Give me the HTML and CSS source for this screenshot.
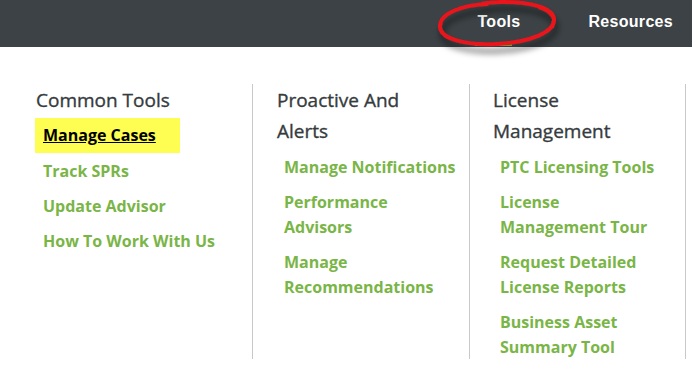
FILE: index.html
```html
<!DOCTYPE html>
<html lang="en">
<head>
    <meta charset="UTF-8">
    <meta name="viewport" content="width=device-width, initial-scale=1.0">
    <title>Tools Menu</title>
    <link rel="stylesheet" href="styles.css">
</head>
<body>
    <div class="topbar">
        <a class="nav-link active" href="#">Tools</a>
        <a class="nav-link" href="#">Resources</a>
        <svg class="circle-mark" width="140" height="70" viewBox="0 0 140 70">
            <defs>
                <filter id="shade" x="-20%" y="-20%" width="140%" height="180%">
                    <feDropShadow dx="2" dy="7" stdDeviation="3" flood-color="#000" flood-opacity="0.55"/>
                </filter>
            </defs>
            <g filter="url(#shade)" fill="none" stroke="#e8141a" stroke-linecap="round">
                <path d="M56 4 C 30 5, 8 14, 9 27 C 10 40, 38 45.5, 66 44 C 100 42, 124 32, 123 19 C 122 8, 100 1.5, 70 2 C 64 2.2, 58 2.6, 52 3.4" stroke-width="4"/>
                <path d="M108 8 C 120 12, 125 19, 122 27" stroke-width="2.2"/>
            </g>
        </svg>
    </div>

    <div class="menu">
        <div class="menu-col">
            <h3>Common Tools</h3>
            <a class="item hl" href="#">Manage Cases</a>
            <a class="item" href="#">Track SPRs</a>
            <a class="item" href="#">Update Advisor</a>
            <a class="item" href="#">How To Work With Us</a>
        </div>
        <div class="menu-col">
            <h3>Proactive And<br>Alerts</h3>
            <a class="item" href="#">Manage Notifications</a>
            <a class="item" href="#">Performance<br>Advisors</a>
            <a class="item" href="#">Manage<br>Recommendations</a>
        </div>
        <div class="menu-col">
            <h3>License<br>Management</h3>
            <a class="item" href="#">PTC Licensing Tools</a>
            <a class="item" href="#">License<br>Management Tour</a>
            <a class="item" href="#">Request Detailed<br>License Reports</a>
            <a class="item" href="#">Business Asset<br>Summary Tool</a>
        </div>
    </div>
</body>
</html>
```

FILE: styles.css
```css
body {
    margin: 0;
    background: #fff;
    font-family: "Open Sans", "Liberation Sans", sans-serif;
}
.topbar {
    position: relative;
    height: 47px;
    background-color: #3c4245;
    display: flex;
    justify-content: flex-end;
    align-items: center;
    padding-right: 19px;
}
.nav-link {
    position: relative;
    font-family: "Liberation Sans", Arial, sans-serif;
    font-weight: bold;
    font-size: 16px;
    letter-spacing: 0.3px;
    color: #fff;
    text-decoration: none;
    margin-left: 68px;
    line-height: 47px;
    margin-top: -5px;
}
.nav-link.active::after {
    content: "";
    position: absolute;
    left: -2px;
    width: 37px;
    bottom: -1px;
    height: 3px;
    background-color: #6cb33e;
}
.circle-mark {
    position: absolute;
    left: 431px;
    top: 0;
    overflow: visible;
}
.menu {
    display: grid;
    grid-template-columns: 217px 217px 216px;
    margin: 37px 0 0 36px;
}
.menu-col {
    height: 274px;
    padding-top: 1px;
    border-right: 1px solid #c8c8c8;
    display: flex;
    flex-direction: column;
    align-items: flex-start;
}
.menu-col + .menu-col {
    padding-left: 24px;
}
.menu-col:last-child {
    padding-left: 23px;
}
.menu-col h3 {
    margin: 0 0 3px;
    font-size: 19px;
    font-weight: normal;
    line-height: 31px;
    color: #363b3e;
    -webkit-text-stroke: 0.35px #363b3e;
}
.item {
    display: block;
    padding: 5px 7px;
    font-size: 16px;
    font-weight: bold;
    line-height: 25px;
    color: #7ab547;
    text-decoration: none;
}
.item.hl {
    background-color: #fdfd52;
    color: #000;
    text-decoration: underline;
    margin: -1px 0 1px -1px;
    padding: 5px 24px 5px 8px;
}
```
